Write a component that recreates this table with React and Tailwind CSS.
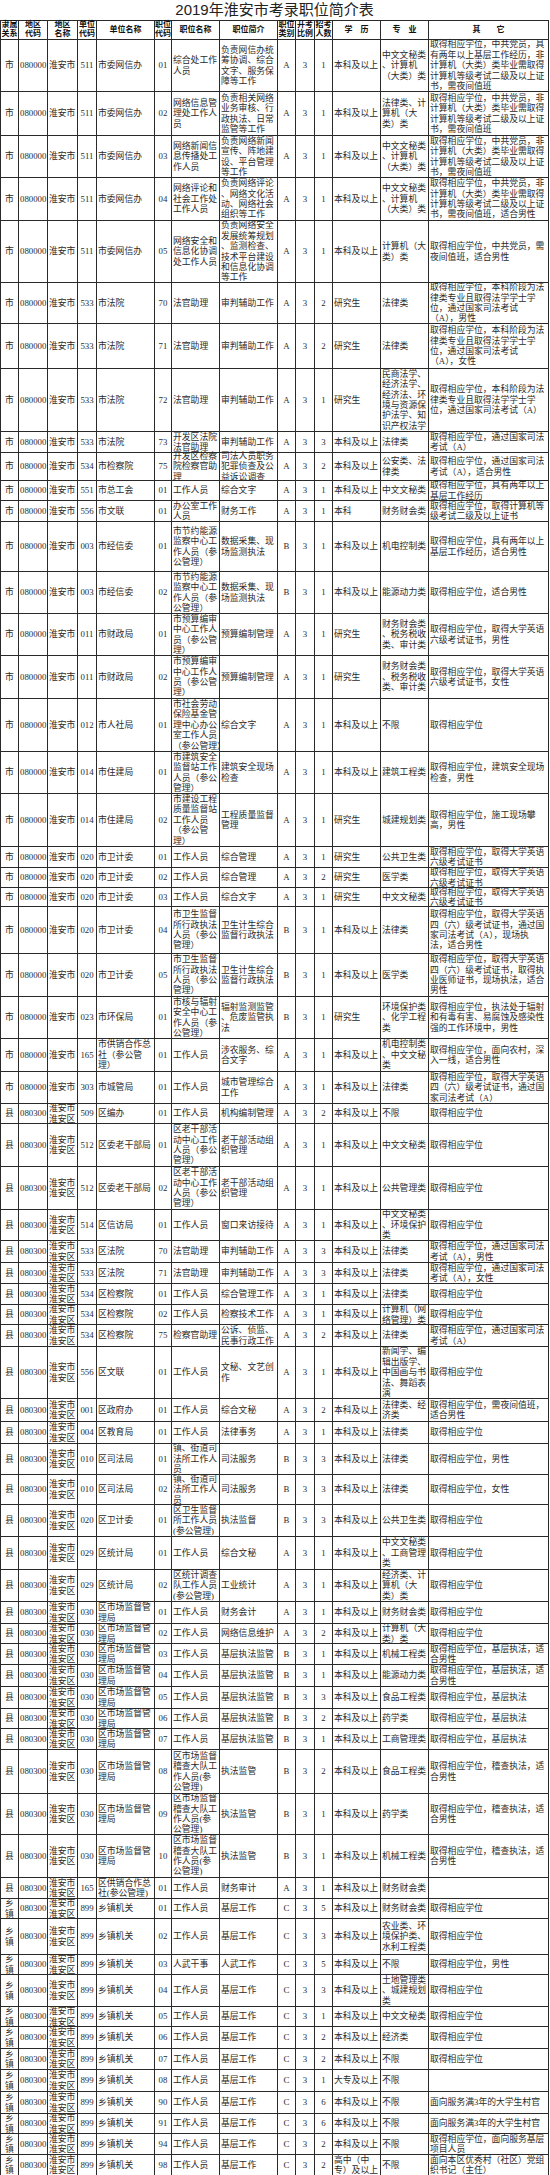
import React from "react";

const WCLS = ["w-[18px]","w-[29px]","w-[30px]","w-[19px]","w-[58px]","w-[17px]","w-[48px]","w-[58px]","w-[18px]","w-[19px]","w-[18px]","w-[48px]","w-[48px]","w-[120px]"];
const ALIGN = ["c","l","l","c","l","c","l","l","c","c","c","l","l","l"];
const HEAD = ["隶属|关系","地区|代码","地区|名称","单位|代码","单位名称","职位|代码","职位名称","职位简介","职位|类别","开考|比例","招考|人数","学　历","专　业","其　　它"];

const MAJ1 = "中文文秘类|、计算机|（大类）类";
const OTH1 = "取得相应学位，中共党员，非|计算机（大类）类毕业需取得|计算机等级考试二级及以上证|书，需夜间值班";
const LAW1 = "取得相应学位，本科阶段为法|律类专业且取得法学学士学|位，通过国家司法考试|";
const JX = "市节约能源|监察中心工|作人员（参|公管理）";
const YS = "市预算编审|中心工作人|员（参公管|理）";
const WJ = "市卫生监督|所行政执法|人员（参公|管理）";
const LG = "区老干部活|动中心工作|人员（参公|管理）";
const SJ = "区市场监督管|理局";
const JC = "区市场监督|稽查大队工|作人员(参|公管理)";
const JCO = "取得相应学位，稽查执法，适|合男性";
const EN6 = "取得相应学位，取得大学英语|六级考试证书";

// [heightClass, rel, unitCode, unitName, posCode, posName, intro, cat, ratio, num, edu, major, other]
const ROWS = [
  ["h-[52px]","s","511","市委网信办","01","综合处工作|人员","负责网信办统|筹协调、综合|文字、服务保|障等工作","A","3","1","本科及以上",MAJ1,"取得相应学位，中共党员，具|有两年以上基层工作经历，非|计算机（大类）类毕业需取得|计算机等级考试二级及以上证|书，需夜间值班"],
  ["h-[44px]","s","511","市委网信办","02","网络信息管|理处工作人|员","负责相关网络|业务审核、行|政执法、日常|监管等工作","A","3","1","本科及以上","法律类、计|算机（大|类）类",OTH1],
  ["h-[42px]","s","511","市委网信办","03","网络新闻信|息传播处工|作人员","负责网络新闻|宣传、阵地建|设、平台管理|等工作","A","3","1","本科及以上",MAJ1,OTH1],
  ["h-[43px]","s","511","市委网信办","04","网络评论和|社会工作处|工作人员","负责网络评论|、网络文化活|动、网络社会|组织等工作","A","3","1","本科及以上",MAJ1,OTH1 + "，适合男性"],
  ["h-[62px]","s","511","市委网信办","05","网络安全和|信息化协调|处工作人员","负责网络安全|发展统筹规划|、监测检查、|技术平台建设|和信息化协调|等工作","A","3","1","本科及以上","计算机（大|类）类","取得相应学位，中共党员，需|夜间值班，适合男性"],
  ["h-[41px]","s","533","市法院","70","法官助理","审判辅助工作","A","3","2","研究生","法律类",LAW1 + "（A），男性"],
  ["h-[45px]","s","533","市法院","71","法官助理","审判辅助工作","A","3","2","研究生","法律类",LAW1 + "（A），女性"],
  ["h-[63px]","s","533","市法院","72","法官助理","审判辅助工作","A","3","1","研究生","民商法学、|经济法学、|经济法、环|境与资源保|护法学、知|识产权法学","取得相应学位，本科阶段为法|律类专业且取得法学学士学|位，通过国家司法考试（A）"],
  ["h-[21px]","s","533","市法院","73","开发区法院|法官助理","审判辅助工作","A","3","3","本科及以上","法律类","取得相应学位，通过国家司法|考试（A）"],
  ["h-[28px]","s","534","市检察院","75","开发区检察|院检察官助|理","司法人员职务|犯罪侦查及公|益诉讼调查","A","3","2","本科及以上","公安类、法|律类","取得相应学位，通过国家司法|考试（A），适合男性"],
  ["h-[20px]","s","551","市总工会","01","工作人员","综合文字","A","3","1","本科及以上","中文文秘类","取得相应学位，具有两年以上|基层工作经历"],
  ["h-[21px]","s","556","市文联","01","办公室工作|人员","财务工作","A","3","1","本科","财务财会类","取得相应学位，取得计算机等|级考试二级及以上证书"],
  ["h-[50px]","s","003","市经信委","01",JX,"数据采集、现|场监测执法","B","3","1","本科及以上","机电控制类","取得相应学位，具有两年以上|基层工作经历，适合男性"],
  ["h-[42px]","s","003","市经信委","02",JX,"数据采集、现|场监测执法","B","3","1","本科及以上","能源动力类","取得相应学位，适合男性"],
  ["h-[42px]","s","011","市财政局","01",YS,"预算编制管理","A","3","1","研究生","财务财会类|、税务税收|类、审计类","取得相应学位，取得大学英语|六级考试证书，男性"],
  ["h-[43px]","s","011","市财政局","02",YS,"预算编制管理","A","3","1","研究生","财务财会类|、税务税收|类、审计类","取得相应学位，取得大学英语|六级考试证书，女性"],
  ["h-[53px]","s","012","市人社局","01","市社会劳动|保险基金管|理中心办公|室工作人员|（参公管理）","综合文字","A","3","1","本科及以上","不限","取得相应学位"],
  ["h-[42px]","s","014","市住建局","01","市建筑安全|监督站工作|人员（参公|管理）","建筑安全现场|检查","A","3","1","本科及以上","建筑工程类","取得相应学位，建筑安全现场|检查，男性"],
  ["h-[53px]","s","014","市住建局","02","市建设工程|质量监督站|工作人员|（参公管|理）","工程质量监督|管理","A","3","1","研究生","城建规划类","取得相应学位，施工现场攀|高，男性"],
  ["h-[21px]","s","020","市卫计委","01","工作人员","综合管理","A","3","1","研究生","公共卫生类",EN6],
  ["h-[20px]","s","020","市卫计委","02","工作人员","综合管理","A","3","2","研究生","医学类",EN6],
  ["h-[19px]","s","020","市卫计委","03","工作人员","综合文字","A","3","1","研究生","中文文秘类",EN6],
  ["h-[47px]","s","020","市卫计委","04",WJ,"卫生计生综合|监督行政执法","B","3","1","本科及以上","法律类","取得相应学位，取得大学英语|四（六）级考试证书，通过国|家司法考试（A），现场执|法，适合男性"],
  ["h-[43px]","s","020","市卫计委","05",WJ,"卫生计生综合|监督行政执法","B","3","1","本科及以上","医学类","取得相应学位，取得大学英语|四（六）级考试证书，取得执|业医师证书，现场执法，适合|男性"],
  ["h-[42px]","s","023","市环保局","01","市核与辐射|安全中心工|作人员（参|公管理）","辐射监测监管|、危废监管执|法","B","3","1","研究生","环境保护类|、化学工程|类","取得相应学位，执法处于辐射|和有毒有害、易腐蚀及感染性|强的工作环境中，男性"],
  ["h-[33px]","s","165","市供销合作总|社（参公管|理）","01","工作人员","涉农服务、综|合文字","A","3","1","本科及以上","机电控制类|、中文文秘|类","取得相应学位，面向农村，深|入一线，适合男性"],
  ["h-[32px]","s","303","市城管局","01","工作人员","城市管理综合|工作","A","3","1","本科及以上","法律类","取得相应学位，取得大学英语|四（六）级考试证书，通过国|家司法考试（A）"],
  ["h-[20px]","x","509","区编办","01","工作人员","机构编制管理","A","3","2","本科及以上","不限","取得相应学位"],
  ["h-[43px]","x","512","区委老干部局","01",LG,"老干部活动组|织管理","A","3","1","本科及以上","中文文秘类","取得相应学位"],
  ["h-[43px]","x","512","区委老干部局","02",LG,"老干部活动组|织管理","A","3","1","本科及以上","公共管理类","取得相应学位"],
  ["h-[31px]","x","514","区信访局","01","工作人员","窗口来访接待","A","3","1","本科及以上","中文文秘类|、环境保护|类","取得相应学位"],
  ["h-[22px]","x","533","区法院","70","法官助理","审判辅助工作","A","3","3","本科及以上","法律类","取得相应学位，通过国家司法|考试（A），男性"],
  ["h-[21px]","x","533","区法院","71","法官助理","审判辅助工作","A","3","3","本科及以上","法律类","取得相应学位，通过国家司法|考试（A），女性"],
  ["h-[21px]","x","534","区检察院","01","工作人员","综合管理工作","A","3","1","本科及以上","法律类","取得相应学位"],
  ["h-[20px]","x","534","区检察院","02","工作人员","检察技术工作","A","3","1","本科及以上","计算机（网|络管理）类","取得相应学位"],
  ["h-[22px]","x","534","区检察院","75","检察官助理","公诉、侦监、|民事行政工作","A","3","2","本科及以上","法律类","取得相应学位，通过国家司法|考试（A）"],
  ["h-[52px]","x","556","区文联","01","工作人员","文秘、文艺创|作","A","3","1","本科及以上","新闻学、编|辑出版学、|中国画与书|法、舞蹈表|演","取得相应学位"],
  ["h-[23px]","x","001","区政府办","01","工作人员","综合文秘","A","3","2","本科及以上","法律类、经|济类","取得相应学位，需夜间值班，|适合男性"],
  ["h-[22px]","x","004","区教育局","01","工作人员","法律事务","A","3","1","本科及以上","法律类","取得相应学位"],
  ["h-[31px]","x","010","区司法局","01","镇、街道司|法所工作人|员","司法服务","B","3","3","本科及以上","法律类","取得相应学位，男性"],
  ["h-[30px]","x","010","区司法局","02","镇、街道司|法所工作人|员","司法服务","B","3","3","本科及以上","法律类","取得相应学位，女性"],
  ["h-[32px]","x","020","区卫计委","01","区卫生监督|所工作人员|(参公管理)","执法监督","B","3","3","本科及以上","公共卫生类","取得相应学位"],
  ["h-[33px]","x","029","区统计局","01","工作人员","综合文秘","A","3","1","本科及以上","中文文秘类|、工商管理|类","取得相应学位"],
  ["h-[32px]","x","029","区统计局","02","区统计调查|队工作人员|(参公管理)","工业统计","A","3","1","本科及以上","经济类、计|算机（大|类）类","取得相应学位"],
  ["h-[22px]","x","030",SJ,"01","工作人员","财务会计","A","3","1","本科及以上","财务财会类","取得相应学位"],
  ["h-[20px]","x","030",SJ,"02","工作人员","网络信息维护","A","3","2","本科及以上","计算机（大|类）类","取得相应学位"],
  ["h-[21px]","x","030",SJ,"03","工作人员","基层执法监管","B","3","1","本科及以上","机械工程类","取得相应学位，基层执法，适|合男性"],
  ["h-[22px]","x","030",SJ,"04","工作人员","基层执法监管","B","3","1","本科及以上","能源动力类","取得相应学位，基层执法，适|合男性"],
  ["h-[22px]","x","030",SJ,"05","工作人员","基层执法监管","B","3","3","本科及以上","食品工程类","取得相应学位，基层执法"],
  ["h-[20px]","x","030",SJ,"06","工作人员","基层执法监管","B","3","2","本科及以上","药学类","取得相应学位，基层执法"],
  ["h-[21px]","x","030",SJ,"07","工作人员","基层执法监管","B","3","1","本科及以上","工商管理类","取得相应学位，基层执法"],
  ["h-[44px]","x","030",SJ,"08",JC,"执法监管","B","3","2","本科及以上","食品工程类",JCO],
  ["h-[41px]","x","030",SJ,"09",JC,"执法监管","B","3","1","本科及以上","药学类",JCO],
  ["h-[43px]","x","030",SJ,"10",JC,"执法监管","B","3","1","本科及以上","机械工程类",JCO],
  ["h-[21px]","x","165","区供销合作总|社(参公管理)","01","工作人员","财务审计","A","3","1","本科及以上","财务财会类",""],
  ["h-[20px]","z","899","乡镇机关","01","工作人员","基层工作","C","3","5","本科及以上","财务财会类","取得相应学位"],
  ["h-[36px]","z","899","乡镇机关","02","工作人员","基层工作","C","3","3","本科及以上","农业类、环|境保护类、|水利工程类","取得相应学位"],
  ["h-[20px]","z","899","乡镇机关","03","人武干事","人武工作","C","3","5","本科及以上","不限","取得相应学位，男性"],
  ["h-[32px]","z","899","乡镇机关","04","工作人员","基层工作","C","3","3","本科及以上","土地管理类|、城建规划|类","取得相应学位"],
  ["h-[20px]","z","899","乡镇机关","05","工作人员","基层工作","C","3","1","本科及以上","中文文秘类","取得相应学位"],
  ["h-[22px]","z","899","乡镇机关","06","工作人员","基层工作","C","3","2","本科及以上","经济类","取得相应学位"],
  ["h-[21px]","z","899","乡镇机关","07","工作人员","基层工作","C","3","2","本科及以上","不限","取得相应学位"],
  ["h-[22px]","z","899","乡镇机关","08","工作人员","基层工作","C","3","1","大专及以上","不限",""],
  ["h-[22px]","z","899","乡镇机关","90","工作人员","基层工作","C","3","6","本科及以上","不限","面向服务满3年的大学生村官"],
  ["h-[20px]","z","899","乡镇机关","91","工作人员","基层工作","C","3","6","本科及以上","不限","面向服务满3年的大学生村官"],
  ["h-[21px]","z","899","乡镇机关","94","工作人员","基层工作","C","3","2","本科及以上","不限","取得相应学位，面向服务基层|项目人员"],
  ["h-[21px]","z","899","乡镇机关","98","工作人员","基层工作","C","3","2","高中（中|专）及以上","不限","面向本区优秀村（社区）党组|织书记（主任）"],
];

const REL = {
  s: ["市", "080000", "淮安市"],
  x: ["县", "080300", "淮安市|淮安区"],
  z: ["乡|镇", "080300", "淮安市|淮安区"],
};

function Cell({ i, text, head }) {
  const lines = text ? text.split("|") : [];
  const center = head || ALIGN[i] === "c";
  return (
    <div
      className={
        WCLS[i] +
        " shrink-0 border-r border-[#2a2a2a] flex flex-col justify-center " +
        (center ? "items-center text-center" : "items-start pl-px")
      }
    >
      {lines.map((l, k) => (
        <div key={k} className="whitespace-nowrap">
          {l}
        </div>
      ))}
    </div>
  );
}

export default function App() {
  return (
    <div className="w-[550px] bg-white text-[#2b2b2b] [font-family:'Liberation_Serif','Noto_Sans_CJK_SC',serif]">
      <div className="h-[20px] w-[549px] flex items-center justify-center text-[15px] leading-[20px] text-[#222] [font-family:'Liberation_Sans','Noto_Sans_CJK_SC',sans-serif]">
        2019年淮安市考录职位简介表
      </div>
      <div className="w-[549px] border-l border-t border-[#2a2a2a]">
        <div className="flex h-[19px] border-b border-[#2a2a2a] text-[8px] leading-[8.8px] font-bold text-[#111]">
          {HEAD.map((h, i) => (
            <Cell key={i} i={i} text={h} head />
          ))}
        </div>
        {ROWS.map((r, idx) => {
          const [h, rel, ...rest] = r;
          const [a, b, c] = REL[rel];
          const cells = [a, b, c, ...rest];
          return (
            <div
              key={idx}
              className={h + " flex border-b border-[#2a2a2a] text-[8.8px] leading-[10.4px]"}
            >
              {cells.map((t, i) => (
                <Cell key={i} i={i} text={t} />
              ))}
            </div>
          );
        })}
      </div>
    </div>
  );
}
